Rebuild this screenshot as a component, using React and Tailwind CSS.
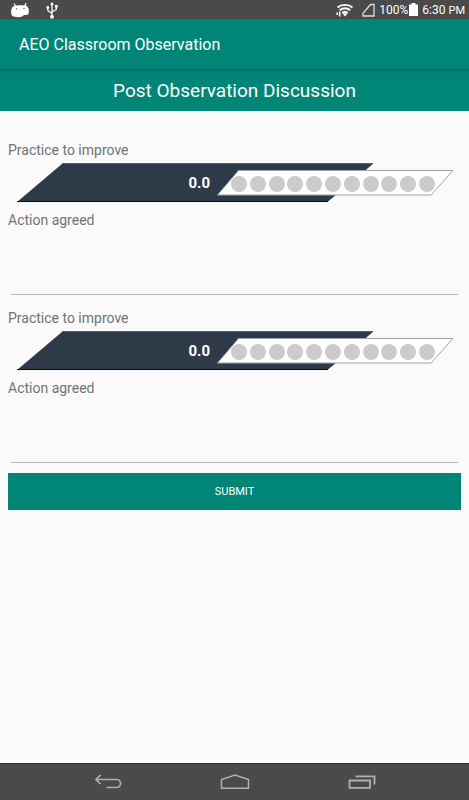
import { useState } from "react";

const SCORES = [0, 1, 2, 3, 4, 5, 6, 7, 8, 9, 10];

function StatusBar() {
  return (
    <div className="flex h-[19px] items-center bg-[#4a4a4b] pr-1 pl-2.5 text-[12px] leading-[19px] text-white">
      <svg width="20" height="16" viewBox="0 0 20 16" fill="#fff" aria-hidden="true">
        <path d="M4.300 2 5.800 4.500M15.800 1.600 14.900 4" stroke="#fff" strokeWidth="1.300" strokeLinecap="round" />
        <path d="M3 4.600C6 3 13 2.800 16.500 3.800c2.500 1.400 2.900 5.500 2 8-1 1.800-3 1.200-4.500 1.300-1.500 1.600-3 2.100-5.200 2.100-1.800 0-2.500-.5-4-.5C2.500 14.600 1.100 13.200 1.100 10.500 1.100 8.500 1.500 6 3 4.600Z" />
        <circle cx="6.500" cy="6.900" r=".7" fill="#4a4a4b" />
        <circle cx="14" cy="6.400" r=".7" fill="#4a4a4b" />
      </svg>
      <svg className="ml-4" width="12" height="18" viewBox="0 0 12 18" fill="none" stroke="#fff" strokeWidth="1.300" aria-hidden="true">
        <path d="M6 3v12M1.800 7v2.500L6 12.500M10.300 6v2.500L6 11" />
        <path d="M6 1 8 4H4Z" fill="#fff" stroke="none" />
        <circle cx="6" cy="15.800" r="1.900" fill="#fff" stroke="none" />
        <circle cx="1.800" cy="6.500" r="1.400" fill="#fff" stroke="none" />
        <path d="M9 4h2.600v2.600H9Z" fill="#fff" stroke="none" />
      </svg>
      <div className="ml-auto flex items-center">
        <svg width="18" height="14" viewBox="0 0 18 14" fill="none" stroke="#fff" strokeWidth="1.900" aria-hidden="true">
          <path d="M1.500 4.500C5.500 1 12.500 1 16.500 4.500M3.800 7.300c3-2.800 7.400-2.800 10.400 0M6.200 9.900c1.600-1.400 4-1.400 5.600 0" />
          <path d="M6.300 10.300h5.400L9 13.500Z" fill="#fff" stroke="none" />
          <path d="M1.200 12V9.500M3.700 13.500V8.500" strokeWidth="1.500" />
        </svg>
        <svg className="ml-2" width="13" height="14" viewBox="0 0 13 14" fill="none" stroke="#ddd" strokeWidth="1.300" aria-hidden="true">
          <path d="M1 13V10.300L8.500 1.500H12V13Z" />
        </svg>
        <span className="ml-1 pt-px">100%</span>
        <svg className="ml-px" width="9" height="13" viewBox="0 0 9 13" fill="#fff" aria-hidden="true">
          <path d="M2.500 0h4v1.500H9V13H0V1.500h2.500Z" />
        </svg>
        <span className="ml-1 pt-px">6:30 <span className="text-[11px]">PM</span></span>
      </div>
    </div>
  );
}

function Rating({ name }) {
  const [score, setScore] = useState(null);
  return (
    <div role="radiogroup" aria-label="Practice to improve" className="relative mt-[3px] flex h-10 items-center justify-end pr-[26px]">
      <svg className="absolute inset-0 h-full w-full" viewBox="0 0 453 40" preserveAspectRatio="none" aria-hidden="true">
        <path d="M54.500.5H365.500L319.500 39H9Z" fill="#2e3a47" />
        <path d="M9 38.500H320" stroke="#05081f" />
        <path d="M54 .5H365" stroke="#56606b" />
        <path d="M230.500 7.500H445L423 32H209.500Z" fill="#fff" stroke="#a0a2a8" />
      </svg>
      <output className="relative mr-[21px] text-[15px] leading-5 font-bold text-white">{(score ?? 0).toFixed(1)}</output>
      <div className="relative mt-[2px] flex w-[204px] justify-between">
        {SCORES.map((value) => (
          <input
            key={value}
            type="radio"
            name={name}
            aria-label={String(value)}
            checked={score === value}
            onChange={() => setScore(value)}
            className="size-4 appearance-none rounded-full bg-[#cbcbcb] checked:bg-[#008577]"
          />
        ))}
      </div>
    </div>
  );
}

function Practice({ id }) {
  return (
    <section className="flex flex-col text-[14px] leading-5 text-[#737373]">
      <h2>Practice to improve</h2>
      <Rating name={`score-${id}`} />
      <label htmlFor={`action-${id}`} className="mt-[7px]">Action agreed</label>
      <textarea
        id={`action-${id}`}
        className="mx-[3px] h-[65px] resize-none border-b border-[#b5b5b5] bg-transparent outline-none"
      />
    </section>
  );
}

function NavBar() {
  return (
    <nav className="flex h-[37px] items-center justify-center gap-[98px] border-t border-[#2d2d2e] bg-[#4a4a4b] text-[#b0b0b0]">
      <button type="button" aria-label="Back">
        <svg width="28" height="16" viewBox="0 0 28 16" fill="none" stroke="currentColor" strokeWidth="1.700">
          <path d="M6.500 1 2 5.500 6.500 10M2 5.500H22.500a3.900 3.900 0 0 1 0 8H12.500" />
        </svg>
      </button>
      <button type="button" aria-label="Home">
        <svg width="30" height="16" viewBox="0 0 30 16" fill="none" stroke="currentColor" strokeWidth="1.500">
          <path d="M1.500 14.200V5.500L15 1l13.500 4.500v8.700Z" />
        </svg>
      </button>
      <button type="button" aria-label="Recent apps">
        <svg width="28" height="16" viewBox="0 0 28 16" fill="none" stroke="currentColor" strokeWidth="1.800">
          <path d="M1.500 6.500H22v7.300H1.500ZM7.500 2.300H26.500V10.500" />
        </svg>
      </button>
    </nav>
  );
}

export default function App() {
  return (
    <div className="flex min-h-screen flex-col bg-[#fafafa] font-[Roboto,sans-serif]">
      <StatusBar />
      <header className="relative flex h-[51px] items-center border-b border-[#00695e] bg-[#008577] px-[19px] pt-0.5 text-[16px] text-white shadow-sm">
        <h1>AEO Classroom Observation</h1>
      </header>
      <div className="flex h-[41px] items-center justify-center bg-[#008577] pt-0.5 text-[19px] text-white">
        Post Observation Discussion
      </div>
      <main className="flex grow flex-col px-2 pt-[29px]">
        <form className="flex flex-col" onSubmit={(event) => event.preventDefault()}>
          <div className="flex flex-col gap-[13px]">
            <Practice id="first" />
            <Practice id="second" />
          </div>
          <button type="submit" className="mt-[10px] h-[37px] bg-[#008577] pt-0.5 text-[11px] text-white">SUBMIT</button>
        </form>
      </main>
      <NavBar />
    </div>
  );
}
